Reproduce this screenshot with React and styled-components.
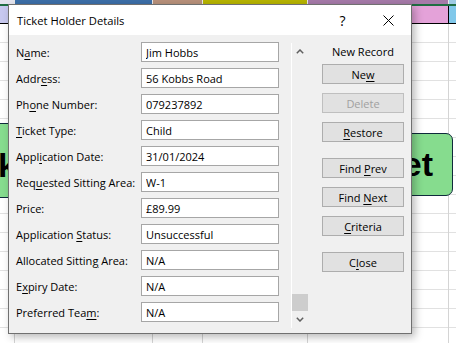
import React from "react";
import styled, {createGlobalStyle} from "styled-components";

const columns = [
  {top: '#e4e4ee', head: '#c7c8ef'},
  {top: '#3c6fa8', head: '#c7c8ef'},
  {top: '#b8917b', head: '#e8cfc0'},
  {top: '#b7b400', head: '#f0ee99'},
  {top: '#a67aa9', head: '#e4a2d9'},
  {top: '#9ecbe5', head: '#80c8ea'},
];

const Chevron = ({down}) => (
  <svg width="8" height="5" viewBox="0 0 8 5">
    <polyline
      points={down ? "0.8,0.8 4,4 7.2,0.8" : "0.8,4.2 4,1 7.2,4.2"}
      fill="none"
      stroke="#606060"
      strokeWidth="1.5"
    />
  </svg>
);

export default function App() {
  const fields = [
    {label: <>N<Key>a</Key>me:</>, value: 'Jim Hobbs'},
    {label: <>Addr<Key>e</Key>ss:</>, value: '56 Kobbs Road'},
    {label: <>Ph<Key>o</Key>ne Number:</>, value: '079237892'},
    {label: <><Key>T</Key>icket Type:</>, value: 'Child'},
    {label: <>Appl<Key>i</Key>cation Date:</>, value: '31/01/2024'},
    {label: <>Req<Key>u</Key>ested Sitting Area:</>, value: 'W-1'},
    {label: <>Price:</>, value: '£89.99'},
    {label: <>Application <Key>S</Key>tatus:</>, value: 'Unsuccessful'},
    {label: <>Allocated Sittin<Key>g</Key> Area:</>, value: 'N/A'},
    {label: <>E<Key>x</Key>piry Date:</>, value: 'N/A'},
    {label: <>Preferred Tea<Key>m</Key>:</>, value: 'N/A'},
  ];

  return (
    <Sheet>
      <GlobalStyle/>
      {columns.map((c, i) => (
        <Column key={i}>
          <TopCell $color={c.top}/>
          <Selection/>
          <HeadCell $color={c.head}/>
          <Cells/>
        </Column>
      ))}

      <LeftShape>Book</LeftShape>
      <RightShape>Ticket</RightShape>

      <Dialog>
        <TitleBar>
          <Title>Ticket Holder Details</Title>
          <TitleButton $w={45}>?</TitleButton>
          <TitleButton $w={46}>
            <svg width="11" height="11" viewBox="0 0 11 11">
              <path d="M0.5 0.5 L10.5 10.5 M10.5 0.5 L0.5 10.5" stroke="#000" strokeWidth="1"/>
            </svg>
          </TitleButton>
        </TitleBar>

        <Body>
          <Fields>
            {fields.map((f, i) => (
              <React.Fragment key={i}>
                <Label>{f.label}</Label>
                <Input readOnly value={f.value}/>
              </React.Fragment>
            ))}
          </Fields>

          <Scrollbar>
            <Arrow><Chevron/></Arrow>
            <Track><Thumb/></Track>
            <Arrow><Chevron down/></Arrow>
          </Scrollbar>

          <Actions>
            <RecordLabel>New Record</RecordLabel>
            <Group>
              <Button>Ne<Key>w</Key></Button>
              <Button disabled>Delete</Button>
              <Button><Key>R</Key>estore</Button>
            </Group>
            <Group>
              <Button>Find <Key>P</Key>rev</Button>
              <Button>Find <Key>N</Key>ext</Button>
              <Button><Key>C</Key>riteria</Button>
            </Group>
            <Group>
              <Button>C<Key>l</Key>ose</Button>
            </Group>
          </Actions>
        </Body>
      </Dialog>
    </Sheet>
  );
}

const GlobalStyle = createGlobalStyle`
  html, body {
    margin: 0;
    padding: 0;
  }
  body {
    background: #fff;
    font-family: "Open Sans", "Noto Sans", sans-serif;
    overflow: hidden;
  }
`;

const Key = styled.u`
  text-decoration-thickness: 1px;
  text-underline-offset: 2px;
`;

const Sheet = styled.div`
  position: relative;
  width: 456px;
  height: 343px;
  overflow: hidden;
  display: grid;
  grid-template-columns: 14px 138px 50px 105px 141px 1fr;
`;

const Column = styled.div`
  display: flex;
  flex-direction: column;

  &:first-child > * {
    border-left: none;
  }
`;

const TopCell = styled.div`
  height: 4px;
  background: ${p => p.$color};
  border-left: 1px solid #e8e8e8;
`;

const Selection = styled.div`
  height: 2px;
  background: #1f6e43;
`;

const HeadCell = styled.div`
  height: 17px;
  background: ${p => p.$color};
  border-left: 1px solid #000;
  border-bottom: 1px solid #000;
`;

const Cells = styled.div`
  flex: 1;
  border-left: 1px solid #d4d4d4;
  background: repeating-linear-gradient(
    to bottom,
    transparent 0,
    transparent 18px,
    #e1e1e1 18px,
    #e1e1e1 19px
  );
`;

const Shape = styled.div`
  position: absolute;
  box-sizing: border-box;
  display: flex;
  align-items: center;
  justify-content: flex-end;
  background: #86dc8e;
  border: 1.5px solid #0f2a3b;
  border-radius: 7px;
  font-family: "Liberation Sans", Arial, sans-serif;
  font-weight: bold;
  font-size: 34px;
  color: #000;
`;

const LeftShape = styled(Shape)`
  left: -100px;
  top: 123px;
  width: 130px;
  height: 75px;
  padding: 10px 12px 0 0;
`;

const RightShape = styled(Shape)`
  left: 310px;
  top: 133px;
  width: 143px;
  height: 63px;
  padding-right: 19px;
`;

const Dialog = styled.div`
  position: absolute;
  left: 8px;
  top: 4px;
  width: 404px;
  height: 330px;
  box-sizing: border-box;
  border: 1px solid #707070;
  background: #f0f0f0;
  box-shadow: 3px 3px 8px rgba(0, 0, 0, 0.28);
  display: flex;
  flex-direction: column;
  font-size: 11px;
  color: #000;
`;

const TitleBar = styled.div`
  flex: none;
  height: 30px;
  background: #fff;
  display: flex;
  align-items: center;
`;

const Title = styled.div`
  flex: 1;
  padding-left: 8px;
  font-size: 11.2px;
`;

const TitleButton = styled.div`
  width: ${p => p.$w}px;
  height: 30px;
  display: flex;
  align-items: center;
  justify-content: center;
  font-size: 14px;
`;

const Body = styled.div`
  flex: 1;
  display: flex;
  align-items: flex-start;
  padding: 7px 7px 0 7px;
`;

const Fields = styled.div`
  display: grid;
  grid-template-columns: 125px 138px;
  grid-auto-rows: 20px;
  row-gap: 6px;
`;

const Label = styled.label`
  align-self: center;
  white-space: nowrap;
`;

const Input = styled.input`
  box-sizing: border-box;
  width: 138px;
  height: 20px;
  margin: 0;
  padding: 0 4px;
  border: 1px solid #a6a6a6;
  background: #fff;
  font: inherit;
  color: #000;
  outline: none;
`;

const Scrollbar = styled.div`
  box-sizing: border-box;
  width: 17px;
  height: 285px;
  margin: 1px 0 0 12px;
  border-left: 1px solid #fff;
  display: flex;
  flex-direction: column;
`;

const Arrow = styled.div`
  height: 17px;
  display: flex;
  align-items: center;
  justify-content: center;
`;

const Track = styled.div`
  flex: 1;
  display: flex;
  flex-direction: column;
  justify-content: flex-end;
`;

const Thumb = styled.div`
  height: 17px;
  background: #cdcdcd;
`;

const Actions = styled.div`
  width: 82px;
  margin-left: 14px;
  display: flex;
  flex-direction: column;
`;

const RecordLabel = styled.div`
  height: 20px;
  line-height: 20px;
  margin-bottom: 2px;
  text-align: center;
`;

const Group = styled.div`
  display: flex;
  flex-direction: column;
  gap: 9px;

  & + & {
    margin-top: 16px;
  }
`;

const Button = styled.button`
  box-sizing: border-box;
  height: 20px;
  margin: 0;
  padding: 0;
  border: 1px solid #adadad;
  background: #e1e1e1;
  font: inherit;
  color: #000;

  &:disabled {
    color: #a0a0a0;
    border-color: #bfbfbf;
  }
`;
